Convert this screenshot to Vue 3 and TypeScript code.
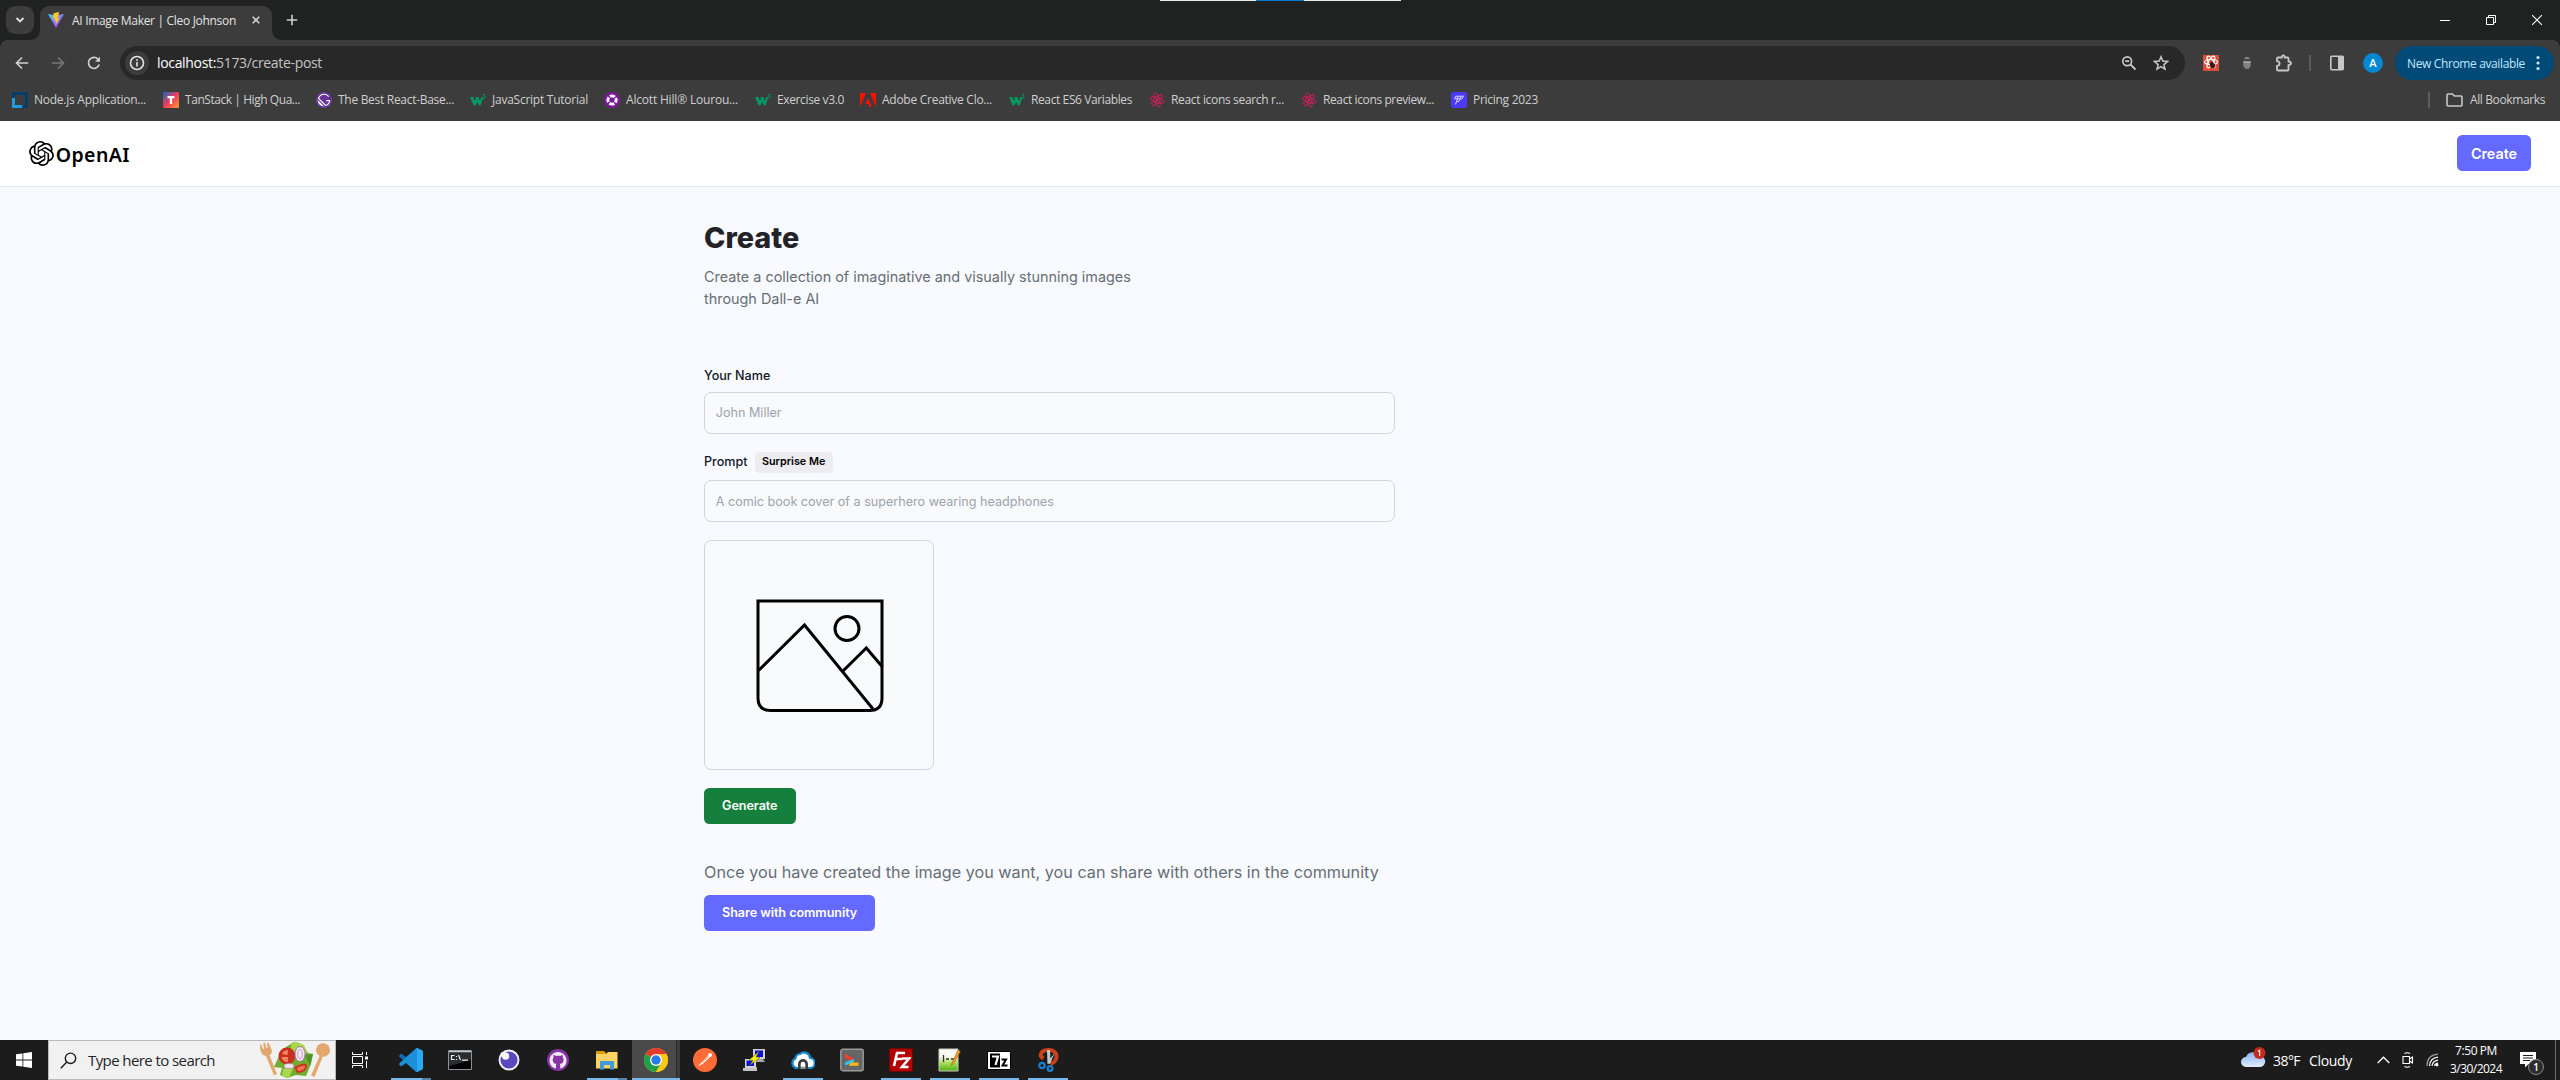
<script setup lang="ts">
import { ref } from 'vue'

interface Bookmark {
  title: string
  slot: number
  text: number
  icon: string
}

interface TaskApp {
  name: string
  icon: string
  open?: boolean
  stacked?: boolean
  active?: boolean
}

// Tightens or loosens tracking so a label fills the given width.
const vFit = {
  mounted(el: HTMLElement, binding: { value: number }) {
    const count = (el.textContent ?? '').trim().length
    const natural = el.getBoundingClientRect().width
    el.style.letterSpacing = `${(binding.value - natural) / count}px`
  },
}

const name = ref('')
const prompt = ref('')

const w3 =
  '<path d="M0 5h3.4l1.5 4L6 6.6 5.400 5h3l1.600 4 1.400-4h2L10.500 13.500H8.900L7.200 9.900 5.200 13.500H3.700z" fill="#059862"/><path d="M12.800 2.600h2.400l-1.200 1.500q1.400.2 1.200 1.400-.3 1.300-2.400.9" fill="none" stroke="#059862" stroke-width=".9"/>'
const atom =
  '<g fill="none" stroke="#d81b60" stroke-width=".9"><ellipse cx="8" cy="8" rx="7.200" ry="2.700" transform="rotate(15 8 8)"/><ellipse cx="8" cy="8" rx="7.200" ry="2.700" transform="rotate(75 8 8)"/><ellipse cx="8" cy="8" rx="7.200" ry="2.700" transform="rotate(135 8 8)"/></g><circle cx="8" cy="8" r="1.300" fill="#e91e63"/>'

const bookmarks: Bookmark[] = [
  {
    title: 'Node.js Application...',
    slot: 151,
    text: 112,
    icon: '<path d="M0 0h16v16h-5v-3h2V3H3v3H0z" fill="#003f6b"/><path d="M0 6h3v7h7v3H0z" fill="#1e9be0"/>',
  },
  {
    title: 'TanStack | High Qua...',
    slot: 153,
    text: 115,
    icon: '<defs><linearGradient id="tan" x1="0" y1="0" x2="1" y2="1"><stop offset="0" stop-color="#0a6dc2"/><stop offset=".5" stop-color="#f0395a"/><stop offset="1" stop-color="#ff9a2e"/></linearGradient></defs><rect width="16" height="16" rx="1" fill="url(#tan)"/><path d="M4.500 4h7v2.200H9.200V12H6.800V6.200H4.500z" fill="#fff"/>',
  },
  {
    title: 'The Best React-Base...',
    slot: 154,
    text: 116,
    icon: '<circle cx="8" cy="8" r="7.600" fill="#fff"/><path transform="scale(.6667)" d="M12 0C5.400 0 0 5.400 0 12s5.400 12 12 12 12-5.400 12-12S18.600 0 12 0zm0 2.571c3.171 0 5.915 1.460 7.629 3.858l-1.286 1.115C16.886 5.572 14.571 4.286 12 4.286c-3.343 0-6.171 2.143-7.286 5.143l9.857 9.857c2.486-.857 4.373-3 4.973-5.572h-4.115V12h6c0 4.457-3.172 8.228-7.372 9.170L2.830 9.943C3.772 5.743 7.543 2.571 12 2.571zm-9.429 9.600l9.344 9.258c-2.400-.086-4.801-.943-6.601-2.743-1.800-1.800-2.743-4.201-2.743-6.515z" fill="#663399"/>',
  },
  { title: 'JavaScript Tutorial', slot: 134, text: 96, icon: w3 },
  {
    title: 'Alcott Hill® Lourou...',
    slot: 151,
    text: 112,
    icon: '<circle cx="8" cy="8" r="8" fill="#7b189f"/><circle cx="8" cy="8" r="4.100" fill="none" stroke="#fff" stroke-width="2.900" stroke-dasharray="5 1.440" stroke-dashoffset="2.500"/>',
  },
  { title: 'Exercise v3.0', slot: 105, text: 67, icon: w3 },
  {
    title: 'Adobe Creative Clo...',
    slot: 149,
    text: 110,
    icon: '<path d="M0 1h6L0 15zM10 1h6v14zM8 6l4 9H9.300L8.100 12H5.300z" fill="#fa0f00"/>',
  },
  { title: 'React ES6 Variables', slot: 140, text: 101, icon: w3 },
  { title: 'React icons search r...', slot: 152, text: 113, icon: atom },
  { title: 'React icons preview...', slot: 150, text: 111, icon: atom },
  {
    title: 'Pricing 2023',
    slot: 90,
    text: 65,
    icon: '<rect width="16" height="16" rx="3" fill="#4a3aff"/><path d="M4.500 4.200h8L10.800 7H8.900L7.600 9.600H5.600L4.300 12.500M4.500 4.200L3.600 6.800h5.200M7 4.200L5.600 9.600M10 4.200L8.800 7" fill="none" stroke="#dcd8ff" stroke-width="1"/>',
  },
]

const apps: TaskApp[] = [
  {
    name: 'Visual Studio Code',
    open: true,
    stacked: true,
    icon: '<path d="M17 .2L7 9.100 2.900 6 1.600 6 .3 7.300v1.500L18 24l5.500-2.500v-2z" fill="#0a6cb4"/><path d="M17 23.800L7 14.900 2.900 18H1.600L.3 16.700v-1.500L18 0l5.500 2.500v2z" fill="#1c8fd8"/><path d="M16.700.3L18 0l5.300 2.400.7 1.300v16.600l-.7 1.300L18 24l-1.300-.3 1.300-1.200v-21z" fill="#2ba8f2"/>',
  },
  {
    name: 'Command Prompt',
    icon: '<path d="M.5 2.500h23v19H.5z" fill="#000"/><path d="M1 4h22v8L1 18z" fill="#2a2d2f"/><path d="M.5 2.500h23v19H.5z" fill="none" stroke="#8b9297"/><path d="M1 3.500h22" stroke="#c9cdd0" stroke-width="1.500"/><path d="M6.500 7.500h-3v4h3M8.500 8v1M8.500 11v1M10.500 7l2 5M14 12.200h6" fill="none" stroke="#eee" stroke-width="1.200"/>',
  },
  {
    name: 'Insomnia',
    icon: '<circle cx="12" cy="12" r="9.500" fill="#5849be" stroke="#f2f0f8" stroke-width="1.900"/><circle cx="8.600" cy="8.200" r="3.600" fill="#f7f6fb"/><circle cx="6" cy="6.500" r="2.500" fill="#f7f6fb"/>',
  },
  {
    name: 'GitHub Desktop',
    icon: '<circle cx="12" cy="12" r="11" fill="#8534a5"/><path transform="translate(3.500 3.700) scale(.71)" fill="#f4eaf7" d="M12 .297c-6.63 0-12 5.373-12 12 0 5.303 3.438 9.8 8.205 11.385.6.113.82-.258.82-.577V19c.3-1 .7-1.600 1-1.900-2.665-.3-5.466-1.332-5.466-5.930 0-1.310.465-2.380 1.235-3.220-.135-.303-.540-1.523.105-3.176 0 0 1.005-.322 3.300 1.230.960-.267 1.980-.399 3-.405 1.020.006 2.040.138 3 .405 2.280-1.552 3.285-1.230 3.285-1.230.645 1.653.240 2.873.120 3.176.765.840 1.230 1.910 1.230 3.220 0 4.610-2.805 5.625-5.475 5.920.420.360.810 1.096.810 2.220v3.786c0 .315.210.690.825.570C20.565 22.092 24 17.592 24 12.297c0-6.627-5.373-12-12-12"/>',
  },
  {
    name: 'File Explorer',
    open: true,
    stacked: true,
    icon: '<path d="M1 3h8l2 2v3H1z" fill="#dd9a07"/><path d="M1 6h10l2-2h9.500v16.500H1z" fill="#fcd364"/><path d="M5 21.500V13h14v8.500h-4V17H9v4.500z" fill="#3d9be0"/>',
  },
  {
    name: 'Google Chrome',
    open: true,
    active: true,
    icon: '<circle cx="12" cy="12" r="12" fill="#fdc916"/><path d="M12 12L1.600 6a12 12 0 0 1 20.800 0z" fill="#e33b2e"/><path d="M12 12L1.600 6A12 12 0 0 0 12 24l5.200-9z" fill="#22a045"/><path d="M12 6h10.400A12 12 0 0 1 12 24l5.200-9z" fill="#fdc916"/><circle cx="12" cy="12" r="6" fill="#fff"/><circle cx="12" cy="12" r="4.700" fill="#2a79e8"/>',
  },
  {
    name: 'Postman',
    icon: '<circle cx="12" cy="12" r="12" fill="#ff6c37"/><path d="M4.800 18.600l3.600-4.200L15 7.800l1.700 1.700-6.800 6.300z" fill="#fff"/><circle cx="17" cy="7" r="2" fill="#fff"/><path d="M9 14.500l6-5.500" stroke="#ff6c37" stroke-width=".7"/>',
  },
  {
    name: 'PuTTY',
    icon: '<path d="M11 1h12v10H11z" fill="#cfcfcf"/><path d="M13 2.500h8V9h-8z" fill="#0a12d8"/><path d="M9 11h12l2 3H9z" fill="#a8a8a8"/><path d="M3 11h11v9H3z" fill="#d6d6d6"/><path d="M4.500 12.500H12V18H4.500z" fill="#0a12d8"/><path d="M1 20h12l2-1v4H1z" fill="#c2c2c2"/><path d="M17.500 3L7 12l4 .5-3.500 5L18 9.500l-4-.7z" fill="#fbf000" stroke="#4b4a10" stroke-width=".5"/>',
  },
  {
    name: 'Cloud Storage',
    open: true,
    icon: '<path d="M5.500 20A5 5 0 0 1 4.500 10.500 5 5 0 0 1 9 6a6 6 0 0 1 10 4 5 5 0 0 1-.5 10z" fill="#fff" stroke="#1789cf" stroke-width="2.200"/><path d="M7 21v-5a5 5 0 0 1 10 0v5h-2.700v-5a2.300 2.300 0 0 0-4.600 0v5z" fill="#3b4043"/><path d="M9.500 21a2.500 2.500 0 0 1 5 0z" fill="#8f959a"/>',
  },
  {
    name: 'Cmder',
    icon: '<rect x=".8" y="1.300" width="22.400" height="21.400" rx="2" fill="#666" stroke="#9c9c9c" stroke-width="1.400"/><path d="M5 5.500l9 5.500v3.500L5 9.500z" fill="#fa3c2d"/><path d="M14 11v3.200l-9 3.300v-3.200z" fill="#2ec4f0"/><path d="M11 14.500h7.500v3.200H8.500z" fill="#fdb913"/>',
  },
  {
    name: 'FileZilla',
    open: true,
    icon: '<path d="M.5.5h23v23H.5z" fill="#b30000" stroke="#6d0000" stroke-dasharray="1 1"/><path d="M5 18L8 5h8M7 11h6M13 10.500h7l-7 8.500h6.500" fill="none" stroke="#fff" stroke-width="2.600"/>',
  },
  {
    name: 'Notepad++',
    open: true,
    icon: '<defs><linearGradient id="npp" x1="0" y1="0" x2="0" y2="1"><stop offset=".35" stop-color="#f9f9f4"/><stop offset=".65" stop-color="#a5dc58"/><stop offset="1" stop-color="#4fae12"/></linearGradient></defs><path d="M1 1h19v22H1z" fill="url(#npp)" stroke="#c9c9c2"/><path d="M5.500 14V7M8 11h3M13 11h3" stroke="#333" fill="none" stroke-width="1.300"/><path d="M13 17L20 2l2.500 1.200L15.500 16z" fill="#f2a01c" stroke="#8a5a10" stroke-width=".5"/>',
  },
  {
    name: '7-Zip',
    open: true,
    icon: '<path d="M.5 3.500h23v18H.5z" fill="#fff" stroke="#000"/><path d="M3 5.500h10v14H3z" fill="#000"/><path d="M5 8.500h6L8.500 17" fill="none" stroke="#fff" stroke-width="2.200"/><path d="M14.500 11.500h4.500L15.500 17.500h5" fill="none" stroke="#000" stroke-width="2"/>',
  },
  {
    name: 'Snipping Tool',
    open: true,
    icon: '<path d="M14.500 16C23 13 22.500 2 13 2 4 2 3 8 7.500 10.500" fill="none" stroke="#c9401b" stroke-width="4"/><path d="M11 2h3l.5 13-3 1zM18.500 5l-4.500 11-3-1z" fill="#c3c8cd"/><circle cx="6" cy="17.500" r="2.700" fill="none" stroke="#1b7fd0" stroke-width="2.200"/><circle cx="14" cy="20.500" r="2.400" fill="none" stroke="#1b7fd0" stroke-width="2.200"/>',
  },
]
</script>

<template>
  <div class="screen">
    <div class="tabstrip">
      <div class="tabsearch">
        <svg width="10" height="10" viewBox="0 0 10 10"><path d="M1.500 3L5 6.500 8.500 3" fill="none" stroke="#dedede" stroke-width="1.900" /></svg>
      </div>
      <div class="tab">
        <svg width="16" height="16" viewBox="0 0 16 16">
          <defs>
            <linearGradient id="vite" x1="0" y1="0" x2=".7" y2="1"><stop offset="0" stop-color="#41d1ff" /><stop offset="1" stop-color="#bd34fe" /></linearGradient>
          </defs>
          <path d="M0 2l8 14 8-14-8 1.400z" fill="url(#vite)" />
          <path d="M11 0L5.500 1.200 5.200 7l1.900-.4-.6 3 1.500-.4-.5 3.800L11.600 6l-2 .3.9-3z" fill="#ffc91f" />
        </svg>
        <span class="tab-title"><span v-fit="164" class="fit">AI Image Maker | Cleo Johnson</span></span>
        <svg class="tab-x" width="8" height="8" viewBox="0 0 8 8"><path d="M.7.7l6.600 6.600M7.300.7L.7 7.300" stroke="#dedede" stroke-width="1.500" /></svg>
      </div>
      <svg class="plus" width="12" height="12" viewBox="0 0 12 12"><path d="M6 .8v10.400M.8 6h10.400" stroke="#d0d0d0" stroke-width="1.600" /></svg>
      <div class="snapline"><i></i></div>
      <div class="winctl">
        <svg width="10" height="10" viewBox="0 0 10 10"><path d="M0 5.500h10" stroke="#fff" /></svg>
        <svg width="10" height="10" viewBox="0 0 10 10"><path d="M.5 2.500h7v7h-7zM2.500 2.500v-2h7v7h-2" fill="none" stroke="#fff" /></svg>
        <svg width="10" height="10" viewBox="0 0 10 10"><path d="M0 0l10 10M10 0L0 10" stroke="#fff" stroke-width="1.100" /></svg>
      </div>
    </div>

    <div class="chrome">
      <div class="toolbar">
        <div class="nav">
          <svg width="14" height="14" viewBox="0 0 14 14"><path d="M13.200 7H1.800M7 1.500L1.500 7 7 12.500" fill="none" stroke="#d0d0d0" stroke-width="1.700" /></svg>
          <svg width="14" height="14" viewBox="0 0 14 14"><path d="M.8 7h11.400M7 1.500L12.500 7 7 12.500" fill="none" stroke="#777" stroke-width="1.700" /></svg>
          <svg width="14" height="14" viewBox="0 0 14 14"><path d="M12.200 8.500A5.500 5.500 0 1 1 11 3.100L12.500 4.600" fill="none" stroke="#d0d0d0" stroke-width="1.700" /><path d="M13 .8v5H8z" fill="#d0d0d0" /></svg>
        </div>
        <div class="omnibox">
          <div class="info">
            <svg width="16" height="16" viewBox="0 0 16 16"><circle cx="8" cy="8" r="6.500" fill="none" stroke="#e3e3e3" stroke-width="1.600" /><path d="M8 7v4.500M8 4.300v1.700" stroke="#e3e3e3" stroke-width="1.600" /></svg>
          </div>
          <span v-fit="165" class="fit url"><b>localhost:</b>5173/create-post</span>
          <svg class="zoomicon" width="16" height="16" viewBox="0 0 16 16"><circle cx="6.200" cy="6.200" r="4.400" fill="none" stroke="#c7c7c7" stroke-width="1.700" /><path d="M4.200 6.200h4M9.500 9.500l5 5" stroke="#c7c7c7" stroke-width="1.800" /></svg>
          <svg width="16" height="16" viewBox="0 0 16 16"><path d="M8 1.800l1.800 4.300 4.700.4-3.600 3.100 1.100 4.600L8 11.700l-4 2.500 1.100-4.600L1.500 6.500l4.700-.4z" fill="none" stroke="#c7c7c7" stroke-width="1.500" /></svg>
        </div>
        <svg class="ext1" width="16" height="16" viewBox="0 0 16 16"><path d="M0 0h16v16H0z" fill="#dd4b39" /><g fill="none" stroke="#fff" stroke-width="1.200"><ellipse cx="8" cy="7" rx="6.500" ry="2.500" /><ellipse cx="8" cy="7" rx="6.500" ry="2.500" transform="rotate(60 8 7)" /><ellipse cx="8" cy="7" rx="6.500" ry="2.500" transform="rotate(120 8 7)" /></g><path d="M6.500 8l3-1.200 3 3.200-1.500 3.400-3.500-1z" fill="#3b1411" /></svg>
        <svg class="ext2" width="10" height="16" viewBox="0 0 10 16"><path d="M2.200 4.200Q2.500 1.800 5 1.800t2.800 2.400z" fill="#858585" /><path d="M1.300 6.300h7.400v4Q8 14 5 14T1.300 10.300z" fill="#808080" /><path d="M1.300 6.300h7.400v1.700H1.300z" fill="#a5a5a5" /></svg>
        <svg class="ext3" width="18" height="18" viewBox="0 0 18 18"><path d="M2 4.500Q2 3.500 3 3.500H6.800Q6.800 1.500 8.300 1.500t1.500 2H12.500Q13.500 3.500 13.500 4.500V7.500Q16 7.800 16 9.300t-2.500 1.800V15.500Q13.500 16.500 12.500 16.500H3Q2 16.500 2 15.500V12Q4.600 11.500 4.600 9.500T2 7z" fill="none" stroke="#c7c7c7" stroke-width="1.800" /></svg>
        <i class="bar"></i>
        <svg class="panel" width="14" height="16" viewBox="0 0 14 16"><rect x=".8" y="1.300" width="12.400" height="13.400" rx="1" fill="none" stroke="#c7c7c7" stroke-width="1.600" /><path d="M8 1h5.500v14H8z" fill="#c7c7c7" /></svg>
        <span class="avatar">A</span>
        <div class="update">
          <span class="update-text"><span v-fit="118" class="fit">New Chrome available</span></span>
          <svg width="4" height="16" viewBox="0 0 4 16"><g fill="#cbe6fb"><circle cx="2" cy="2.500" r="1.600" /><circle cx="2" cy="8" r="1.600" /><circle cx="2" cy="13.500" r="1.600" /></g></svg>
        </div>
      </div>
      <div class="bookmarks">
        <div v-for="b in bookmarks" :key="b.title" class="bookmark" :style="{ width: b.slot + 'px' }">
          <svg width="16" height="16" viewBox="0 0 16 16" v-html="b.icon"></svg>
          <span v-fit="b.text" class="fit">{{ b.title }}</span>
        </div>
        <div class="allmarks">
          <i></i>
          <svg width="17" height="14" viewBox="0 0 17 14"><path d="M1 2Q1 1 2 1H6.500L8.300 3H15Q16 3 16 4V12Q16 13 15 13H2Q1 13 1 12z" fill="none" stroke="#c7c7c7" stroke-width="1.600" /></svg>
          <span v-fit="75" class="fit">All Bookmarks</span>
        </div>
      </div>
    </div>

    <div class="page">
      <header>
        <div class="logo">
          <svg width="25" height="25" viewBox="0 0 24 24"><path d="M22.2819 9.8211a5.9847 5.9847 0 0 0-.5157-4.9108 6.0462 6.0462 0 0 0-6.5098-2.9A6.0651 6.0651 0 0 0 4.9807 4.1818a5.9847 5.9847 0 0 0-3.9977 2.9 6.0462 6.0462 0 0 0 .7427 7.0966 5.98 5.98 0 0 0 .511 4.9107 6.051 6.051 0 0 0 6.5146 2.9001A5.9847 5.9847 0 0 0 13.2599 24a6.0557 6.0557 0 0 0 5.7718-4.2058 5.9894 5.9894 0 0 0 3.9977-2.9001 6.0557 6.0557 0 0 0-.7475-7.0729zm-9.022 12.6081a4.4755 4.4755 0 0 1-2.8764-1.0408l.1419-.0804 4.7783-2.7582a.7948.7948 0 0 0 .3927-.6813v-6.7369l2.02 1.1686a.071.071 0 0 1 .038.052v5.5826a4.504 4.504 0 0 1-4.4945 4.4944zm-9.6607-4.1254a4.4708 4.4708 0 0 1-.5346-3.0137l.142.0852 4.783 2.7582a.7712.7712 0 0 0 .7806 0l5.8428-3.3685v2.3324a.0804.0804 0 0 1-.0332.0615L9.74 19.9502a4.4992 4.4992 0 0 1-6.1408-1.6464zM2.3408 7.8956a4.485 4.485 0 0 1 2.3655-1.9728V11.6a.7664.7664 0 0 0 .3879.6765l5.8144 3.3543-2.0201 1.1685a.0757.0757 0 0 1-.071 0l-4.8303-2.7865A4.504 4.504 0 0 1 2.3408 7.872zm16.5963 3.8558L13.1038 8.364 15.1192 7.2a.0757.0757 0 0 1 .071 0l4.8303 2.7913a4.4944 4.4944 0 0 1-.6765 8.1042v-5.6772a.79.79 0 0 0-.407-.667zm2.0107-3.0231l-.142-.0852-4.7735-2.7818a.7759.7759 0 0 0-.7854 0L9.409 9.2297V6.8974a.0662.0662 0 0 1 .0284-.0615l4.8303-2.7866a4.4992 4.4992 0 0 1 6.6802 4.66zM8.3065 12.863l-2.02-1.1638a.0804.0804 0 0 1-.038-.0567V6.0742a4.4992 4.4992 0 0 1 7.3757-3.4537l-.142.0805L8.704 5.459a.7948.7948 0 0 0-.3927.6813zm1.0976-2.3654l2.602-1.4998 2.6069 1.4998v2.9994l-2.5974 1.4997-2.6067-1.4997Z" /></svg>
          <span v-fit="74" class="fit wordmark">OpenAI</span>
        </div>
        <button class="btn nav-create" type="button">Create</button>
      </header>

      <main>
        <h1>Create</h1>
        <p class="lead">Create a collection of imaginative and visually stunning images through Dall-e AI</p>
        <form @submit.prevent>
          <div class="field">
            <label for="name">Your Name</label>
            <input id="name" v-model="name" type="text" placeholder="John Miller" />
          </div>
          <div class="field">
            <div class="label-row">
              <label for="prompt">Prompt</label>
              <button class="surprise" type="button">Surprise Me</button>
            </div>
            <input id="prompt" v-model="prompt" type="text" placeholder="A comic book cover of a superhero wearing headphones" />
          </div>
          <div class="preview">
            <svg width="128" height="114" viewBox="0 0 128 114"><g fill="none" stroke="#000" stroke-width="3"><path d="M2 2H126V99Q126 111.500 113.500 111.500H14.500Q2 111.500 2 99Z" /><path d="M2.500 71.500L48.500 26 117 110M86.500 72.500L110.300 49 126.500 68" /><circle cx="91" cy="29.500" r="12" /></g></svg>
          </div>
          <button class="btn generate" type="button">Generate</button>
          <div class="share">
            <p>Once you have created the image you want, you can share with others in the community</p>
            <button class="btn" type="submit">Share with community</button>
          </div>
        </form>
      </main>
    </div>

    <div class="taskbar">
      <div class="start">
        <svg width="16" height="16" viewBox="0 0 16 16"><path d="M0 2.300L6.500 1.400V7.600H0zM7.300 1.300L16 0V7.600H7.300zM0 8.400H6.500V14.600L0 13.700zM7.300 8.400H16V16L7.300 14.800z" fill="#fff" /></svg>
      </div>
      <div class="search">
        <svg width="17" height="17" viewBox="0 0 17 17"><circle cx="10.500" cy="6.300" r="5.200" fill="none" stroke="#1c1c1c" stroke-width="1.400" /><path d="M6.800 10L.8 16.200" stroke="#1c1c1c" stroke-width="1.400" /></svg>
        <span class="hint"><span v-fit="127" class="fit">Type here to search</span></span>
        <svg width="72" height="36" viewBox="0 0 72 36">
          <g fill="#e2a76c">
            <path d="M1 3l1-1 2 5 1-.3L4.300 1 6 .7l1.500 5.600 1-.4L8 1l1.600-.2 2.600 6q2 4.500-1.700 6.200L18 32l-3 1.500L7 14Q1 14 1 3" />
            <ellipse cx="64" cy="8" rx="7" ry="6.800" />
            <path d="M61 13l3 1-8.500 21-3.500-1.500z" />
          </g>
          <path d="M15 25l5-11 7-9 8-5 9 3 5 8 5 1-2 10-5 12-10-1-9 3-7-3 2-7z" fill="#6fae30" />
          <path d="M32 1l6-1 7 3 3 8-6 4-10-4zM24 27l11-3-5 12-7-2z" fill="#a8d84c" />
          <path d="M46 13l8-1-3 11z" fill="#4f9227" />
          <circle cx="28" cy="14" r="8.500" fill="#c92f1c" />
          <path d="M23 12q2-4 6-4l-.500 5zM22.500 15h6.500v5q-5.500 0-6.500-5" fill="#f58462" />
          <path d="M35 25q12-6 13-2 0 8-10 8z" fill="#d0321e" /><path d="M38 26q8-4 8-1-1 4-7 4z" fill="#f37457" />
          <ellipse cx="41" cy="12" rx="5" ry="7.500" fill="#f3e6f4" stroke="#a45fa8" stroke-width=".8" /><ellipse cx="41" cy="12" rx="2.300" ry="4.500" fill="none" stroke="#bd86c0" stroke-width=".8" />
          <ellipse cx="30" cy="24" rx="5" ry="2.500" fill="#f1e5f2" stroke="#b57bb8" stroke-width=".7" />
        </svg>
      </div>
      <div class="taskview">
        <svg width="17" height="16" viewBox="0 0 17 16"><path d="M.5 0v2.500h10V0M.5 4.500h10v7H.5zM.5 16v-2.500h10V16M14.500 0v3M14.500 9v7" fill="none" stroke="#fff" /><path d="M13 4.500h3v3h-3z" fill="#fff" /></svg>
      </div>
      <div class="apps">
        <div v-for="a in apps" :key="a.name" class="app" :class="{ open: a.open, stacked: a.stacked, active: a.active }">
          <svg width="24" height="24" viewBox="0 0 24 24" v-html="a.icon"></svg>
        </div>
      </div>
      <div class="tray">
        <div class="weather">
          <svg width="25" height="22" viewBox="0 0 25 22">
            <defs><linearGradient id="cl" x1="0" y1="0" x2="0" y2="1"><stop offset="0" stop-color="#8ab4f4" /><stop offset="1" stop-color="#e3edff" /></linearGradient></defs>
            <path d="M5 20a5 5 0 0 1 0-10A7.500 7.500 0 0 1 18.500 9 5.500 5.500 0 0 1 19 20z" fill="url(#cl)" />
            <circle cx="18.500" cy="6" r="6" fill="#c42b1c" /><path d="M17 4.500l1.700-1.200V9" fill="none" stroke="#fff" stroke-width="1.100" />
          </svg>
          <span class="temp"><span v-fit="27" class="fit">38°F</span></span>
          <span class="sky"><span v-fit="43" class="fit">Cloudy</span></span>
        </div>
        <svg class="chev" width="13" height="8" viewBox="0 0 13 8"><path d="M.7 7L6.500 1.200 12.300 7" fill="none" stroke="#fff" stroke-width="1.300" /></svg>
        <svg class="meet" width="12" height="16" viewBox="0 0 12 16"><path d="M1 4.500h6.500v7H1zM7.500 7l3-2v6l-3-2M2.500 1.500Q5 0 8 1.500M2.500 14.500Q5 16 8 14.500" fill="none" stroke="#fff" stroke-width="1.100" /></svg>
        <svg class="wifi" width="13" height="14" viewBox="0 0 13 14"><g fill="none" stroke="#fff" stroke-width="1.200"><path d="M1 13Q1 2 12 1.200" stroke="#9a9a9a" /><path d="M3.500 13Q4 5 12 4.200M6 13Q6.500 8 12 7.200M8.500 13Q9 10.500 12 10.200" /></g><circle cx="11" cy="12" r="1.400" fill="#fff" /></svg>
        <div class="clock">
          <span v-fit="42" class="fit">7:50 PM</span>
          <span v-fit="52" class="fit">3/30/2024</span>
        </div>
        <div class="notif">
          <svg width="16" height="16" viewBox="0 0 16 16"><path d="M0 0h16v12H8.500L5 15.500V12H0z" fill="#fff" /><path d="M3 3.500h10M3 6h10M3 8.500h7" stroke="#1c1c1c" /></svg>
          <span>1</span>
        </div>
        <i class="peek"></i>
      </div>
    </div>
  </div>
</template>

<style>
body {
  background: #f9faff;
  overflow: hidden;
}
</style>

<style scoped>
* {
  box-sizing: border-box;
}
svg {
  display: block;
  flex: none;
}
.screen {
  width: 2560px;
  height: 1080px;
  display: flex;
  flex-direction: column;
  overflow: hidden;
  font-family: 'Open Sans', 'Noto Sans', sans-serif;
  font-size: 12px;
  color: #cfcfcf;
}
.fit {
  display: inline-block;
  white-space: nowrap;
  font-stretch: 92%;
}

/* Browser tab strip */
.tabstrip {
  position: relative;
  flex: none;
  height: 40px;
  background: #202221;
  display: flex;
  align-items: center;
  padding-left: 6px;
}
.tabsearch {
  width: 28px;
  height: 28px;
  border-radius: 9px;
  background: #3c3c3c;
  display: flex;
  align-items: center;
  justify-content: center;
  margin-right: 6px;
}
.tab {
  position: relative;
  width: 232px;
  height: 34px;
  align-self: flex-end;
  background: #3c3c3c;
  border-radius: 9px 9px 0 0;
  display: flex;
  align-items: center;
  padding: 0 0 6px 8px;
  color: #e3e3e3;
}
.tab::before,
.tab::after {
  content: '';
  position: absolute;
  bottom: 0;
  width: 9px;
  height: 9px;
}
.tab::before {
  left: -9px;
  background: radial-gradient(circle at 0 0, transparent 8.5px, #3c3c3c 9px);
}
.tab::after {
  right: -9px;
  background: radial-gradient(circle at 100% 0, transparent 8.5px, #3c3c3c 9px);
}
.tab-title {
  width: 180px;
  margin-left: 8px;
}
.plus {
  margin-left: 14px;
}
.snapline {
  position: absolute;
  left: 1160px;
  top: 0;
  width: 241px;
  height: 1px;
  background: #e3e9e6;
  padding-left: 96px;
}
.snapline i {
  display: block;
  width: 48px;
  height: 1px;
  background: #0078d7;
}
.winctl {
  margin-left: auto;
  margin-right: 18px;
  display: flex;
  gap: 36px;
}

/* Toolbar */
.chrome {
  flex: none;
  height: 81px;
  background: linear-gradient(#202221 8px, #3c3c3c 8px);
  position: relative;
}
.chrome::before {
  content: '';
  position: absolute;
  inset: 0;
  background: #3c3c3c;
  border-radius: 8px 8px 0 0;
}
.chrome > * {
  position: relative;
}
.toolbar {
  padding-top: 6px;
  display: flex;
  align-items: center;
  height: 40px;
}
.nav {
  width: 120px;
  padding-left: 15px;
  display: flex;
  gap: 22px;
}
.omnibox {
  width: 2065px;
  height: 34px;
  border-radius: 17px;
  background: #282828;
  display: flex;
  align-items: center;
  padding: 0 16px 0 5px;
}
.info {
  width: 24px;
  height: 24px;
  border-radius: 50%;
  background: #3c3c3c;
  display: flex;
  align-items: center;
  justify-content: center;
  margin-right: 8px;
}
.url {
  font-size: 14px;
  line-height: 18px;
  color: #c4c4c4;
}
.url b {
  font-weight: 400;
  color: #fff;
}
.zoomicon {
  margin-left: auto;
  margin-right: 16px;
}
.ext1 {
  margin-left: 18px;
}
.ext2 {
  margin-left: 23px;
}
.ext3 {
  margin-left: 23px;
}
.bar {
  width: 2px;
  height: 16px;
  margin-left: 16px;
  background: #5c5c5c;
}
.panel {
  margin-left: 19px;
}
.avatar {
  width: 20px;
  height: 20px;
  margin-left: 19px;
  border-radius: 50%;
  background: #0288d1;
  color: #fff;
  font-size: 11px;
  font-weight: 600;
  line-height: 20px;
  text-align: center;
}
.update {
  width: 159px;
  height: 34px;
  margin-left: 12px;
  padding-left: 12px;
  border-radius: 17px;
  background: #004a77;
  color: #c2e7ff;
  display: flex;
  align-items: center;
}
.update-text {
  width: 129px;
}
.bookmarks {
  height: 40px;
  display: flex;
  align-items: center;
  padding-left: 12px;
}
.bookmark {
  display: flex;
  align-items: center;
  gap: 6px;
  flex: none;
}
.bookmarks .fit {
  margin-top: -1px;
}
.allmarks {
  margin-left: auto;
  width: 132px;
  display: flex;
  align-items: center;
}
.allmarks i {
  width: 2px;
  height: 16px;
  background: #5c5c5c;
  margin-right: 16px;
}
.allmarks svg {
  margin-right: 7px;
}

/* Page */
.page {
  flex: 1;
  min-height: 0;
  background: #f9faff;
  font-family: Inter, sans-serif;
  line-height: 1.5;
}
header {
  height: 66px;
  background: #fff;
  border-bottom: 1px solid #e2e5ec;
  display: flex;
  align-items: center;
  justify-content: space-between;
  padding: 0 28.8px;
}
.logo {
  display: flex;
  align-items: center;
  gap: 2px;
}
.wordmark {
  font-family: 'Noto Sans', sans-serif;
  font-weight: 600;
  font-size: 19.5px;
  line-height: 25px;
  color: #000;
  font-stretch: 100%;
  padding-top: 1px;
}
.btn {
  border: 0;
  border-radius: 5.4px;
  background: #6469ff;
  color: #fff;
  font: 600 12.6px/18px Inter, sans-serif;
  letter-spacing: -0.05px;
  padding: 9px 18px;
  display: block;
}
.nav-create {
  font-size: 14.4px;
  line-height: 21.6px;
  padding: 8.2px 14.2px 6.2px;
  margin-top: -1px;
}
main {
  width: 1152px;
  margin: 0 auto;
  padding-top: 28.8px;
}
h1 {
  margin: 0;
  font-size: 28.8px;
  font-weight: 800;
  line-height: 43.2px;
  color: #222328;
}
p {
  margin: 0;
}
.lead {
  width: 450px;
  margin-top: 7.2px;
  font-size: 14.4px;
  line-height: 21.6px;
  color: #666e75;
}
form {
  width: 691.2px;
  margin-top: 57.6px;
  display: flex;
  flex-direction: column;
  align-items: flex-start;
}
.field {
  width: 100%;
  margin-bottom: 18px;
}
label {
  display: block;
  font-size: 12.6px;
  line-height: 18px;
  font-weight: 500;
  color: #111827;
}
.field > label,
.label-row {
  margin-bottom: 7.2px;
}
.label-row {
  display: flex;
  align-items: center;
  gap: 7.2px;
}
.surprise {
  border: 0;
  border-radius: 4.5px;
  background: #ececf1;
  color: #000;
  font: 600 10.8px/14.4px Inter, sans-serif;
  padding: 3.6px 7.2px;
}
input {
  display: block;
  width: 100%;
  border: 1px solid #d1d5db;
  border-radius: 7.2px;
  background: #f9fafb;
  padding: 0 10.8px;
  font: 400 12.6px/18px Inter, sans-serif;
  height: 41.4px;
}
input::placeholder {
  color: #9ca3af;
}
.preview {
  width: 230.4px;
  height: 230px;
  border: 1px solid #d1d5db;
  border-radius: 7.2px;
  background: #f9fafb;
  display: flex;
  align-items: center;
  justify-content: center;
  padding: 2px 0 0 1px;
}
.generate {
  margin-top: 18px;
  background: #15803d;
}
.share {
  margin-top: 36px;
}
.share p {
  font-size: 16.2px;
  line-height: 25.2px;
  color: #666e75;
  margin-bottom: 10px;
}

/* Taskbar */
.taskbar {
  flex: none;
  height: 40px;
  background: #1c1c1c;
  display: flex;
  color: #fff;
}
.start {
  width: 48px;
  display: flex;
  align-items: center;
  justify-content: center;
}
.search {
  width: 288px;
  background: #f1f1f1;
  border: 1px solid #b9b9b9;
  display: flex;
  align-items: center;
  padding-left: 11px;
  color: #262626;
}
.hint {
  width: 171px;
  margin-left: 11px;
  font-size: 15px;
}
.taskview {
  width: 48px;
  display: flex;
  align-items: center;
  justify-content: center;
}
.apps {
  display: flex;
  gap: 1px;
  margin-left: 3px;
}
.app {
  width: 48px;
  display: flex;
  align-items: center;
  justify-content: center;
  position: relative;
}
.app.open::after {
  content: '';
  position: absolute;
  left: 4px;
  right: 4px;
  bottom: 0;
  height: 2px;
  background: #76b9ed;
}
.app.stacked::after {
  background: linear-gradient(90deg, #76b9ed 31px, #5583aa 31px);
}
.app.active {
  background: linear-gradient(90deg, #4a4a4a 44px, #2b2b2b 44px, #2b2b2b 45px, #3c3c3c 45px);
}
.app.active::after {
  left: 0;
  right: 0;
}
.tray {
  margin-left: auto;
  width: 320px;
  display: flex;
  align-items: center;
}
.weather {
  display: flex;
  align-items: center;
  padding-left: 1px;
  font-size: 14px;
  width: 137px;
}
.weather svg {
  margin-top: -4px;
}
.temp {
  width: 36px;
  margin-left: 7px;
}
.meet {
  margin-left: 12px;
}
.wifi {
  margin-left: 12px;
}
.clock {
  width: 64px;
  margin-left: 5px;
  display: flex;
  flex-direction: column;
  align-items: center;
  line-height: 18px;
}
.notif {
  position: relative;
  margin-left: 12px;
  width: 16px;
  height: 16px;
}
.notif span {
  position: absolute;
  left: 8px;
  top: 7px;
  width: 16px;
  height: 16px;
  border-radius: 50%;
  border: 1px solid #8a8a8a;
  background: #2c2c2c;
  font-size: 10px;
  font-weight: 600;
  line-height: 14px;
  text-align: center;
}
.peek {
  width: 1px;
  height: 40px;
  background: #6a6a6a;
  margin-left: auto;
  margin-right: 4px;
}
</style>
